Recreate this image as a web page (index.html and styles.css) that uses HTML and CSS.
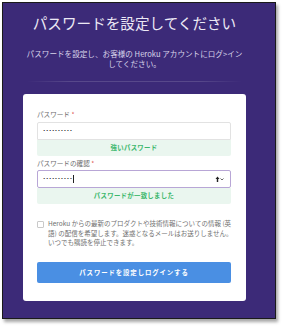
FILE: index.html
```html
<!DOCTYPE html>
<html lang="ja">
<head>
<meta charset="utf-8">
<link rel="stylesheet" href="styles.css">
</head>
<body>
<div class="frame">
  <h1 class="title">パスワードを設定してください</h1>
  <p class="subtitle">パスワードを設定し、お客様の Heroku アカウントにログ&gt;イン<br>してください。</p>
  <div class="divider"></div>
  <div class="card">
    <label class="label">パスワード <span class="req">*</span></label>
    <div class="input"><span class="dots">••••••••••</span></div>
    <div class="ok">強いパスワード</div>
    <label class="label label2">パスワードの確認 <span class="req">*</span></label>
    <div class="input focus"><span class="dots">••••••••••</span><span class="caret"></span>
      <svg class="keyicon" width="9" height="6" viewBox="0 0 9 6"><path d="M2.5 0.5 L0.5 3 L1.8 3 L1.8 6 L3.2 6 L3.2 3 L4.5 3 Z" fill="#222"/><path d="M5.5 2.5 L7 4 L8.5 2.5" fill="none" stroke="#555" stroke-width="0.9"/></svg>
    </div>
    <div class="ok">パスワードが一致しました</div>
    <div class="optin">
      <span class="box"></span>
      <p class="optin-text">Heroku からの最新のプロダクトや技術情報についての情報 (英<br>語) の配信を希望します。迷惑となるメールはお送りしません。<br>いつでも購読を停止できます。</p>
    </div>
    <button class="btn">パスワードを設定しログインする</button>
  </div>
</div>
</body>
</html>
```
FILE: styles.css
```css
html, body {
  margin: 0;
  padding: 0;
  background: #ffffff;
}
body {
  font-family: "Noto Sans CJK JP", "Noto Sans", sans-serif;
  width: 283px;
  height: 327px;
  overflow: hidden;
}
.frame {
  margin: 2px 0 0 2px;
  border: 1px solid #1a1a1a;
  background: #3c2a78;
  box-shadow: 2px 3px 3px rgba(0, 0, 0, 0.35);
  padding: 0 29px 0 20px;
  box-sizing: border-box;
  width: 274px;
  height: 317px;
  display: flex;
  flex-direction: column;
}
.title {
  margin: 10px 0 0;
  font-size: 14.6px;
  line-height: 20px;
  font-weight: 400;
  color: #ece9f5;
  text-align: center;
  white-space: nowrap;
}
.subtitle {
  margin: 16px 0 0;
  font-size: 7.6px;
  line-height: 10px;
  color: #d9d5ea;
  text-align: center;
  white-space: nowrap;
}
.divider {
  margin: 12px 4px 0;
  height: 1px;
  background: linear-gradient(90deg, rgba(255,255,255,0), rgba(255,255,255,0.14) 20%, rgba(255,255,255,0.14) 80%, rgba(255,255,255,0));
}
.card {
  margin-top: 12px;
  background: #ffffff;
  border-radius: 3px;
  padding: 15px 15px 18px 14px;
  display: flex;
  flex-direction: column;
}
.label {
  font-size: 6.6px;
  line-height: 10px;
  color: #6b6b6b;
  white-space: nowrap;
}
.label2 {
  margin-top: 2px;
}
.req {
  color: #e0524f;
}
.input {
  margin-top: 3px;
  height: 18px;
  box-sizing: border-box;
  border: 1px solid #e2e2e2;
  border-radius: 2px 2px 0 0;
  display: flex;
  align-items: center;
  padding: 0 5px;
}
.input.focus {
  margin-top: 2px;
  border-color: #b8a6d6;
  border-radius: 2px;
}
.dots {
  font-family: "DejaVu Sans", sans-serif;
  font-size: 4px;
  letter-spacing: 0.6px;
  color: #333;
  line-height: 1;
}
.caret {
  width: 1px;
  height: 8px;
  background: #222;
  margin-left: 0;
}
.keyicon {
  margin-left: auto;
  margin-right: 1px;
}
.ok {
  height: 16px;
  background: #eaf6ef;
  border-radius: 0 0 2px 2px;
  color: #3db86d;
  font-size: 6.4px;
  font-weight: 700;
  letter-spacing: 0.3px;
  line-height: 16px;
  text-align: center;
  white-space: nowrap;
}
.optin {
  margin-top: 15px;
  display: flex;
  align-items: flex-start;
}
.box {
  flex: none;
  width: 5px;
  height: 5px;
  border: 1px solid #c9c9c9;
  border-radius: 1px;
  margin-top: 2px;
  margin-right: 4px;
}
.optin-text {
  margin: 0;
  font-size: 6.5px;
  line-height: 9.5px;
  color: #707070;
  white-space: nowrap;
}
.btn {
  margin-top: 14px;
  height: 21px;
  border: none;
  border-radius: 2px;
  background: #4a8fe3;
  color: #ffffff;
  font-family: inherit;
  font-size: 6.4px;
  font-weight: 700;
  letter-spacing: 0.9px;
  padding: 0;
}
```
